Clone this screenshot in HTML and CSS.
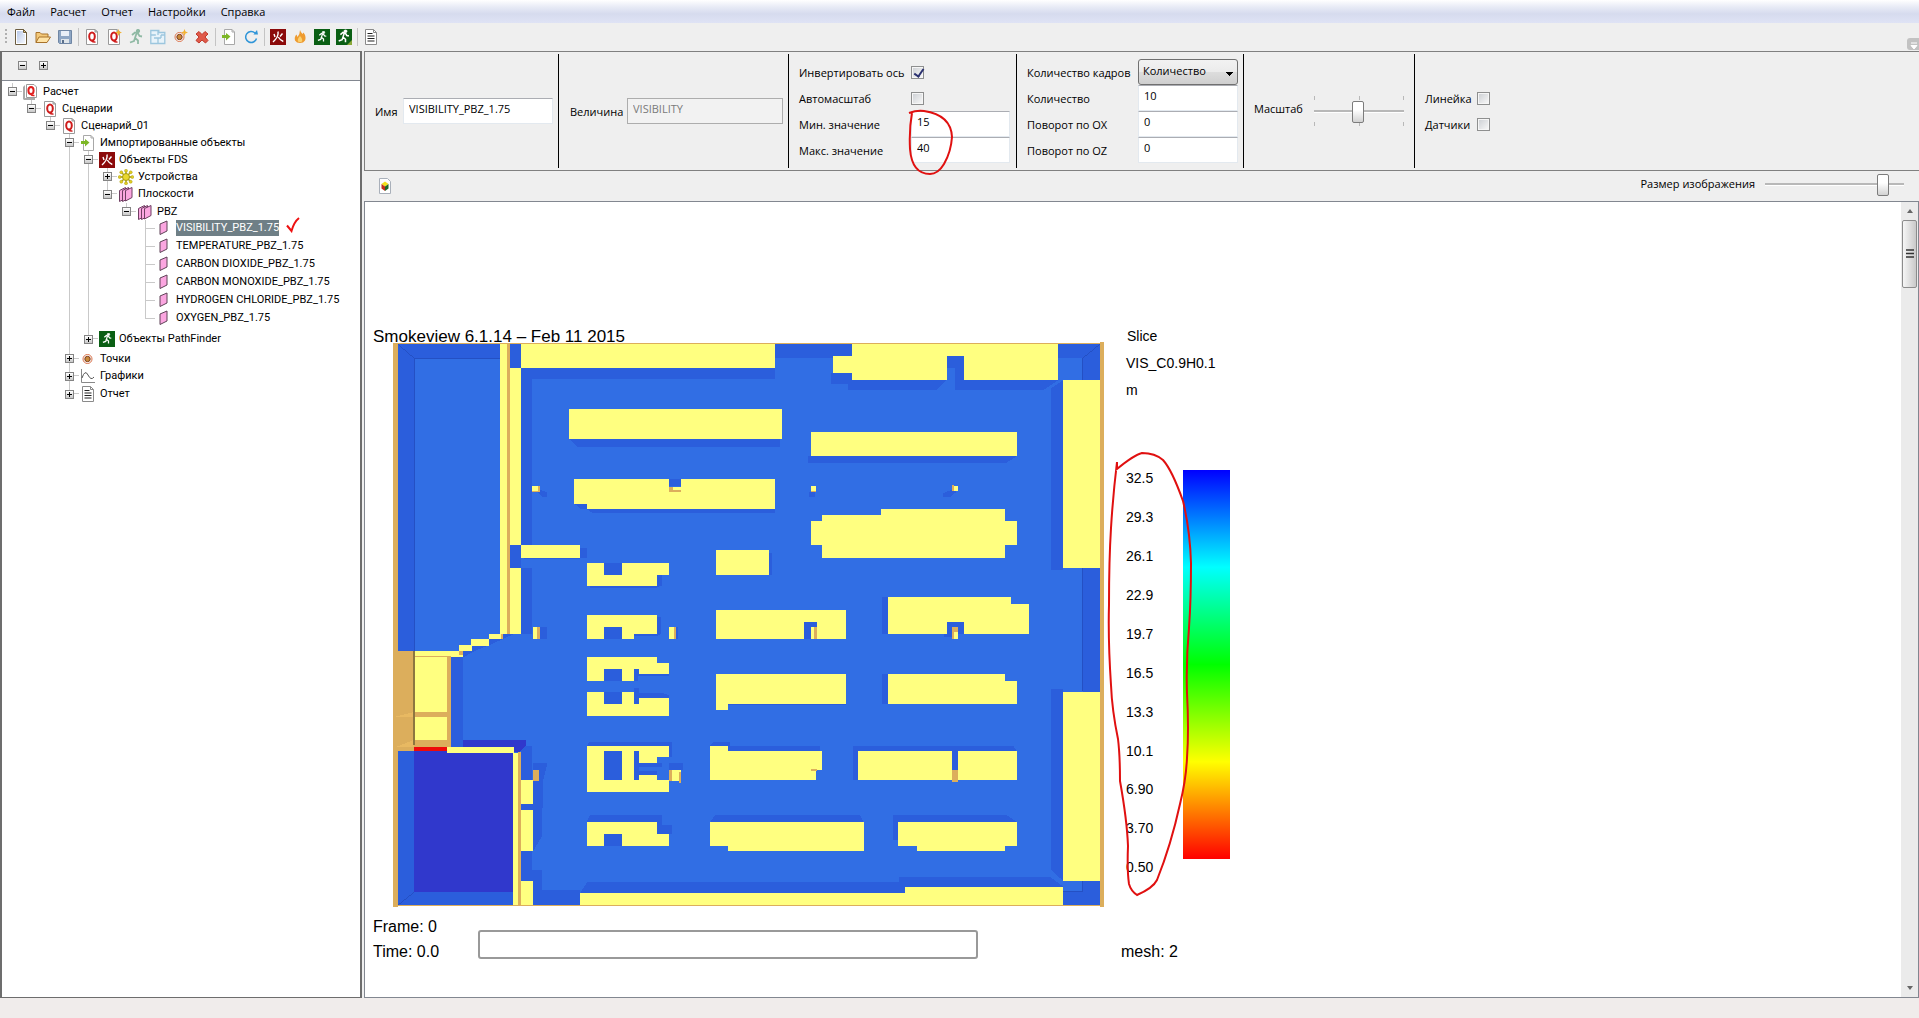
FILE: index.html
```html
<!DOCTYPE html>
<html lang="ru">
<head>
 <meta charset="utf-8">
 <title>Расчет</title>
 <link rel="stylesheet" href="styles.css">
</head>
<body>
<svg class="sprite" aria-hidden="true">
	<defs>
		<linearGradient id="gPaper" x1="0" y1="0" x2="1" y2="1"><stop offset="0" stop-color="#b9c9e8"/><stop offset="1" stop-color="#f4f7fc"/></linearGradient>
		<linearGradient id="gBar" x1="0" y1="0" x2="0" y2="1">
			<stop offset="0" stop-color="#0000ff"/><stop offset=".25" stop-color="#00ffff"/><stop offset=".5" stop-color="#00ff00"/><stop offset=".75" stop-color="#ffff00"/><stop offset="1" stop-color="#ff0000"/>
		</linearGradient>
	</defs>
	<symbol id="i-new" viewBox="0 0 16 16"><path d="M2.500.5h8l3 3v12h-11z" fill="#fff" stroke="#6b5c40"/><path d="M4 2h6v3h2v9H4z" fill="url(#gPaper)"/><path d="M10.500.5v3h3z" fill="#e8c36a" stroke="#6b5c40"/></symbol>
	<symbol id="i-open" viewBox="0 0 16 16"><path d="M1 13.500V3.500h4l1.500 1.500H13v3" fill="#f3c878" stroke="#a8722a"/><path d="M1 13.500L4 8h11.500L12 13.500z" fill="#ffe3a5" stroke="#a8722a"/></symbol>
	<symbol id="i-save" viewBox="0 0 16 16"><path d="M1.500 1.500h13v13h-12l-1-1z" fill="#8ea6c4" stroke="#6f86a4"/><path d="M4 2h8v5H4z" fill="#e9eff7"/><path d="M4 10h8v4H4z" fill="#dfe5ea"/><path d="M5 11h2v3H5z" fill="#5b708c"/></symbol>
	<symbol id="i-q" viewBox="0 0 16 16"><path d="M2.500.5h8.500l2.500 2.500v12.500h-11z" fill="#fff" stroke="#9a9a9a"/><path d="M11 .5v2.500h2.500z" fill="#ddd" stroke="#9a9a9a"/><ellipse cx="8" cy="7.500" rx="2.800" ry="4" fill="none" stroke="#cf1d1d" stroke-width="2"/><path d="M7.500 11.500q1.500 2 4 1.500" fill="none" stroke="#cf1d1d" stroke-width="1.500"/></symbol>
	<symbol id="i-qq" viewBox="0 0 16 16"><path d="M0 3l2-2v13h10v2H1l-1-1z" fill="#aaa"/><path d="M3.500.5h7.500l2.500 2.500v10.500h-10z" fill="#fff" stroke="#9a9a9a"/><ellipse cx="8" cy="6.500" rx="2.600" ry="3.500" fill="none" stroke="#e02020" stroke-width="2"/><path d="M7.500 10q1.500 2 4 1.500" fill="none" stroke="#e02020" stroke-width="1.500"/></symbol>
	<symbol id="i-qnew" viewBox="0 0 16 16"><use href="#i-q"/><path d="M12.500 0l1 2.500 2.500 1-2.500 1-1 2.500-1-2.500-2.500-1 2.500-1z" fill="#f2b233"/></symbol>
	<symbol id="i-run" viewBox="0 0 16 16"><circle cx="10" cy="2" r="1.700"/><path d="M4 6l3-2.500 3 1 1.500 2.500 2.500.5M8.500 4.500L7 9l3 2.500V15M7 9l-1 3-4 1.500" fill="none" stroke-width="1.800"/></symbol>
	<symbol id="i-plan" viewBox="0 0 16 16"><path d="M.8 1.500h8v2h6v11H.8zM.8 6h5M8 1.500V6M8 9v5.500M4 9h7M11 6h3.500M11 6v3" fill="#e8f3fa" stroke="#9cc6de" stroke-width="1.300"/></symbol>
	<symbol id="i-point" viewBox="0 0 16 16"><circle cx="7.500" cy="8" r="4.500" fill="#fff" stroke="#d9714a"/><circle cx="7.500" cy="8" r="2.700" fill="#c98a3a" stroke="#7c3a1c"/></symbol>
	<symbol id="i-pointnew" viewBox="0 0 16 16"><use href="#i-point"/><path d="M12.500 0l1 2.500 2.500 1-2.500 1-1 2.500-1-2.500-2.500-1 2.500-1z" fill="#f2b233"/></symbol>
	<symbol id="i-del" viewBox="0 0 16 16"><path d="M5 2.500l3 3 3-3L14 5l-3 3 3 3.500-2.500 2.500L8 11l-3 3-3-2.500L5 8 2 5z" fill="#e05a4a" stroke="#c03a2c"/></symbol>
	<symbol id="i-import" viewBox="0 0 16 16"><path d="M3.500.5h7.500l2.500 2.500v12.500h-10z" fill="#fff" stroke="#a8a8a8"/><path d="M11 .5v2.500h2.500" fill="none" stroke="#a8a8a8"/><path d="M1 6h4V4l4.500 3.500L5 11.500V9H1z" fill="#7db726"/></symbol>
	<symbol id="i-refresh" viewBox="0 0 16 16"><path d="M13.500 9.500A5.500 5.500 0 1 1 12 4" fill="none" stroke="#2f95d8" stroke-width="1.500"/><path d="M10.500 5.500h4.500L14 1z" fill="#2f95d8"/></symbol>
	<symbol id="i-fds" viewBox="0 0 16 16"><path d="M0 0h16v16H0z" fill="#8b0a0a"/><path d="M8 2.500q1 5-5 10.500M8.300 8q2 3.500 5 4.500M4 5l1 3M12.500 4.500L10 7.500" fill="none" stroke="#fff" stroke-width="1.400"/></symbol>
	<symbol id="i-fire" viewBox="0 0 16 16"><path d="M8 1q.5 2 2.500 4l1-1.500q3 4 1.500 8Q11.500 14 8 14t-5-2.500Q2 8 4.500 5.500L5.500 8Q8 5 8 1z" fill="#ee9b2f"/><path d="M8 7q3 3 2 5.500-2 1-4 0Q5 10 8 7z" fill="#fbd06c"/></symbol>
	<symbol id="i-pf" viewBox="0 0 16 16"><path d="M0 0h16v16H0z" fill="#0a5f14"/><g fill="#fff" stroke="#fff" transform="translate(2.500 2) scale(.7)"><use href="#i-run" width="16" height="16"/></g></symbol>
	<symbol id="i-pf2" viewBox="0 0 16 16"><path d="M0 0h16v16H0z" fill="#0a5f14"/><g fill="#fff" stroke="#fff" transform="translate(1 .5) scale(.85)"><use href="#i-run" width="16" height="16"/></g><path d="M16 11v5h-5z" fill="#8aa83a"/></symbol>
	<symbol id="i-report" viewBox="0 0 16 16"><path d="M2.500.5h8l3 3v12h-11z" fill="#fff" stroke="#8a8a8a"/><path d="M10.500.5v3h3" fill="none" stroke="#8a8a8a"/><path d="M4.500 4.500h5M4.500 7h7M4.500 9.500h7M4.500 12h7" stroke="#222" stroke-width="1.200"/></symbol>
	<symbol id="i-dev" viewBox="0 0 16 16"><g stroke="#a89a10" stroke-width="1.400"><path d="M8 1v14M1 8h14M3 3l10 10M13 3L3 13"/></g><g fill="#e3cf22" stroke="#a89a10" stroke-width=".5"><circle cx="8" cy="1.700" r="1.500"/><circle cx="8" cy="14.300" r="1.500"/><circle cx="1.700" cy="8" r="1.500"/><circle cx="14.300" cy="8" r="1.500"/><circle cx="3.300" cy="3.300" r="1.500"/><circle cx="12.700" cy="3.300" r="1.500"/><circle cx="3.300" cy="12.700" r="1.500"/><circle cx="12.700" cy="12.700" r="1.500"/></g><circle cx="8" cy="8" r="3.500" fill="#e9d82e" stroke="#a89a10"/></symbol>
	<symbol id="i-planes" viewBox="0 0 16 16"><g fill="#fba6e0" stroke="#6e3f62"><path d="M1.500 4.500l6-3v11l-6 3z"/><path d="M4.500 4.500l6-3v11l-6 3z"/><path d="M7.500 4.500l6.500-3v10l-6.500 3.500z"/></g></symbol>
	<symbol id="i-plane" viewBox="0 0 16 16"><path d="M4 4l7-3v10l-7 3.500z" fill="#fba6e0" stroke="#5e4357"/></symbol>
	<symbol id="i-chart" viewBox="0 0 16 16"><path d="M1.500 1v13.500H15" fill="none" stroke="#888"/><path d="M2 10q3-9 6-3t6 2" fill="none" stroke="#555"/></symbol>
	<symbol id="i-cube" viewBox="0 0 16 16"><path d="M2.500.5h8l3 3v12h-11z" fill="#fff" stroke="#a9b0ba"/><path d="M8 3.500l3.500 2.500L8 8.500 4.500 6z" fill="#f3e21c"/><path d="M4.500 6L8 8.500v4.500l-3.500-2.500z" fill="#c0301c"/><path d="M11.500 6L8 8.500v4.500l3.500-2.500z" fill="#1f6a2a"/></symbol>
</svg>

<nav class="menu">
	<button type="button">Файл</button>
	<button type="button">Расчет</button>
	<button type="button">Отчет</button>
	<button type="button">Настройки</button>
	<button type="button">Справка</button>
</nav>

<div class="toolbar">
	<span class="grip"></span>
	<button type="button" aria-label="Создать"><svg class="icon"><use href="#i-new"/></svg></button>
	<button type="button" aria-label="Открыть"><svg class="icon"><use href="#i-open"/></svg></button>
	<button type="button" aria-label="Сохранить"><svg class="icon"><use href="#i-save"/></svg></button>
	<span class="sep"></span>
	<button type="button" aria-label="Расчет"><svg class="icon"><use href="#i-q"/></svg></button>
	<button type="button" aria-label="Новый сценарий"><svg class="icon"><use href="#i-qnew"/></svg></button>
	<button type="button" aria-label="Эвакуация"><svg class="icon run"><use href="#i-run"/></svg></button>
	<button type="button" aria-label="План"><svg class="icon"><use href="#i-plan"/></svg></button>
	<button type="button" aria-label="Новая точка"><svg class="icon"><use href="#i-pointnew"/></svg></button>
	<button type="button" aria-label="Удалить"><svg class="icon"><use href="#i-del"/></svg></button>
	<span class="sep"></span>
	<button type="button" aria-label="Импорт"><svg class="icon"><use href="#i-import"/></svg></button>
	<button type="button" aria-label="Обновить"><svg class="icon"><use href="#i-refresh"/></svg></button>
	<span class="sep"></span>
	<button type="button" aria-label="FDS"><svg class="icon"><use href="#i-fds"/></svg></button>
	<button type="button" aria-label="Пожар"><svg class="icon"><use href="#i-fire"/></svg></button>
	<button type="button" aria-label="PathFinder"><svg class="icon"><use href="#i-pf"/></svg></button>
	<button type="button" aria-label="PathFinder 2"><svg class="icon"><use href="#i-pf2"/></svg></button>
	<span class="sep"></span>
	<button type="button" aria-label="Отчет"><svg class="icon"><use href="#i-report"/></svg></button>
	<span class="overflow"><svg width="12" height="12"><path d="M4 5h6M4 7.500h6L7 11z" stroke="#fff" fill="#fff"/></svg></span>
</div>

<div class="workspace">
	<aside class="side">
		<div class="side_bar">
			<button type="button" class="exp minus" aria-label="Свернуть все"></button>
			<button type="button" class="exp plus" aria-label="Развернуть все"></button>
		</div>
		<div class="tree">
			<ul>
				<li><div class="row"><button type="button" class="exp minus" aria-label="Свернуть"></button><svg class="icon"><use href="#i-qq"/></svg><span>Расчет</span></div>
				<ul>
					<li><div class="row"><button type="button" class="exp minus" aria-label="Свернуть"></button><svg class="icon"><use href="#i-q"/></svg><span>Сценарии</span></div>
					<ul>
						<li><div class="row"><button type="button" class="exp minus" aria-label="Свернуть"></button><svg class="icon"><use href="#i-q"/></svg><span>Сценарий_01</span></div>
						<ul>
							<li><div class="row"><button type="button" class="exp minus" aria-label="Свернуть"></button><svg class="icon"><use href="#i-import"/></svg><span>Импортированные объекты</span></div>
							<ul>
								<li><div class="row"><button type="button" class="exp minus" aria-label="Свернуть"></button><svg class="icon"><use href="#i-fds"/></svg><span>Объекты FDS</span></div>
								<ul>
									<li><div class="row"><button type="button" class="exp plus" aria-label="Развернуть"></button><svg class="icon"><use href="#i-dev"/></svg><span>Устройства</span></div></li>
									<li><div class="row tall"><button type="button" class="exp minus" aria-label="Свернуть"></button><svg class="icon"><use href="#i-planes"/></svg><span>Плоскости</span></div>
									<ul>
										<li><div class="row"><button type="button" class="exp minus" aria-label="Свернуть"></button><svg class="icon"><use href="#i-planes"/></svg><span>PBZ</span></div>
										<ul class="leaves">
											<li><div class="row"><svg class="icon"><use href="#i-plane"/></svg><span class="selected">VISIBILITY_PBZ_1.75</span><svg class="tick" width="14" height="16"><path d="M1 8.500l4.500 5.500Q8 5 13 1" fill="none" stroke="#ee1111" stroke-width="2"/></svg></div></li>
											<li><div class="row"><svg class="icon"><use href="#i-plane"/></svg><span>TEMPERATURE_PBZ_1.75</span></div></li>
											<li><div class="row"><svg class="icon"><use href="#i-plane"/></svg><span>CARBON DIOXIDE_PBZ_1.75</span></div></li>
											<li><div class="row"><svg class="icon"><use href="#i-plane"/></svg><span>CARBON MONOXIDE_PBZ_1.75</span></div></li>
											<li><div class="row"><svg class="icon"><use href="#i-plane"/></svg><span>HYDROGEN CHLORIDE_PBZ_1.75</span></div></li>
											<li><div class="row"><svg class="icon"><use href="#i-plane"/></svg><span>OXYGEN_PBZ_1.75</span></div></li>
										</ul></li>
									</ul></li>
								</ul></li>
								<li><div class="row pathfinder"><button type="button" class="exp plus" aria-label="Развернуть"></button><svg class="icon"><use href="#i-pf"/></svg><span>Объекты PathFinder</span></div></li>
							</ul></li>
							<li><div class="row"><button type="button" class="exp plus" aria-label="Развернуть"></button><svg class="icon"><use href="#i-point"/></svg><span>Точки</span></div></li>
							<li><div class="row tall"><button type="button" class="exp plus" aria-label="Развернуть"></button><svg class="icon"><use href="#i-chart"/></svg><span>Графики</span></div></li>
							<li><div class="row tall"><button type="button" class="exp plus" aria-label="Развернуть"></button><svg class="icon"><use href="#i-report"/></svg><span>Отчет</span></div></li>
						</ul></li>
					</ul></li>
				</ul></li>
			</ul>
		</div>
	</aside>

	<main class="content">
		<form class="props">
			<div class="group g_name"><label for="name">Имя</label><input type="text" id="name" value="VISIBILITY_PBZ_1.75"></div>
			<div class="group g_value"><label for="value">Величина</label><input type="text" id="value" value="VISIBILITY" disabled></div>
			<div class="group fields g_axis">
				<label for="invert">Инвертировать ось</label><input type="checkbox" id="invert" checked>
				<label for="auto">Автомасштаб</label><input type="checkbox" id="auto">
				<label for="min">Мин. значение</label><input type="text" id="min" value="15">
				<label for="max">Макс. значение</label><input type="text" id="max" value="40">
				<svg class="mark" width="48" height="68"><path d="M2 4Q10 1 17 2Q44 6 45 28Q44 43 37 55Q31 65 23 65Q5 65 3 40Q2 20 5 4" fill="none" stroke="#e01010" stroke-width="2"/></svg>
			</div>
			<div class="group fields g_frames">
				<label for="mode">Количество кадров</label><select id="mode"><option>Количество</option></select>
				<label for="count">Количество</label><input type="text" id="count" value="10">
				<label for="ox">Поворот по OX</label><input type="text" id="ox" value="0">
				<label for="oz">Поворот по OZ</label><input type="text" id="oz" value="0">
			</div>
			<div class="group g_scale"><label for="scale">Масштаб</label><span class="ticks"><input type="range" id="scale" min="0" max="100" value="49"></span></div>
			<div class="group fields g_show">
				<label for="ruler">Линейка</label><input type="checkbox" id="ruler">
				<label for="sensors">Датчики</label><input type="checkbox" id="sensors">
			</div>
		</form>

		<div class="image_bar">
			<button type="button" aria-label="Изображение"><svg class="icon"><use href="#i-cube"/></svg></button>
			<label for="size">Размер изображения</label>
			<input type="range" id="size" min="0" max="100" value="88">
		</div>

		<div class="viewport">
			<svg class="smokeview" width="880" height="790" viewBox="365 202 880 790">
				<!-- plan, three units to a pixel -->
				<g transform="translate(360 320) scale(.33333)" shape-rendering="crispEdges">
					<path d="M100 69H2231V1758H100z" fill="#316ee4"/>
					<!-- walls and shadows -->
					<g fill="#2b5edc">
						<path d="M113 72H2220V115H163V992H113z"/>
						<path d="M113 1293H163V1715H460V1758H113zM2168 115H2220V1758H2110V1715H2168z"/>
						<path d="M451 72H482V143H1245V177H516V675H451z"/>
						<path d="M451 675H482V745H516V942H451zM482 713H660V718H500zM660 683H682V713H660z"/>
						<path d="M627 357H1260V380H650zM680 567H1245V580H698zM926 478H962V498H926zM643 551H680V567H662z"/>
						<path d="M1412 160H1475V180H1760L1730 210H1463V193H1412zM1760 107H1812V180H2095L2050 210H1785V143H1760z"/>
						<path d="M2073 205L2110 180V750H2073zM2073 1107H2110V1683L2073 1650z"/>
						<path d="M1345 409H1970L1940 428H1345zM538 508L562 518V532H550L530 515zM1347 515H1365V530H1347z"/>
						<path d="M1777 508L1750 520V532H1770L1790 515z"/>
						<path d="M733 728H785V765H733zM890 765H905V797H900L890 803H690V797H890zM1228 700H1235V765H1228zM733 922H785V958H733zM822 942H890V890H902V942L890 948H822zM540 922H562V958H540zM947 922H954V958H947z"/>
						<path d="M1333 906H1370V922H1353V958H1333zM1565 832H1583V942H1565zM1760 906H1812V942H1793V922H1777V950H1752V942H1760z"/>
						<path d="M272 1010H309V1280H272zM309 994L336 977L388 958L430 942H462L400 970L340 995L310 1012z"/>
						<path d="M733 1047H785V1083H733zM822 1047H838V1062H926V1068H835V1083H822zM733 1115H785V1151H733zM822 1105H838V1135H926V1125L905 1118H838V1151H822zM1103 1151H1458V1156H1103zM1565 1063H1583V1151H1565z"/>
						<path d="M482 1277H516V1381H482zM519 1330H562L550 1380L545 1550L519 1594zM482 1594H516V1650H545V1710H660V1758H519V1683H482zM482 1453H519V1470H482z"/>
						<path d="M733 1293H785V1381H733zM690 1265H935V1312H926V1277H680zM822 1293H838V1329H905V1340H838V1352H890V1365H838V1381H822zM926 1330H970V1350H926z"/>
						<path d="M1060 1265H1110V1277H1380V1293H1103V1277H1051zM1480 1277H1960L1970 1293H1494V1381H1480zM1777 1293H1793V1350H1777z"/>
						<path d="M690 1485H905V1515H935V1543H890V1506H680zM733 1543H785V1579H733zM1065 1485H1500L1511 1506H1051zM1600 1485H1940L1970 1506H1614V1560H1600z"/>
						<path d="M660 1720L682 1686H1616V1670H2070L2110 1700V1720z"/>
					</g>
					<path d="M113 72L163 115V992M163 115H420M2220 72L2168 115V180M2168 745V1112M2110 1715H2168V1683M113 1756L161 1718" fill="none" stroke="#2450c4" stroke-width="3"/>
					<!-- closed room -->
					<path d="M161 1293H459V1715H161zM309 1260H498V1277L480 1295H461V1280H309z" fill="#3038cc"/>
					<g fill="#ffff80">
						<path d="M421 72H440V942H421zM451 143H482V675H451zM451 745H482V942H451zM482 72H1245V143H482z"/>
						<path d="M627 268H1265V357H627zM482 676H660V713H482zM1067 691H1228V765H1067z"/>
						<path d="M643 478H926V502H962V478H1245V567H680V551H643z"/>
						<path d="M680 728H733V765H785V728H926V765H890V797H680z"/>
						<path d="M680 886H890V942H822V958H785V922H733V958H680z"/>
						<path d="M1067 869H1458V958H1370V906H1333V958H1067z"/>
						<path d="M386 942H430V958H388V977H336V994H309V1010H262V1280H461V1299H261V1260H163V994H297V975H333V958H386z"/>
						<path d="M680 1010H890V1030H926V1062H838V1047H822V1083H785V1047H733V1083H680z"/>
						<path d="M680 1115H733V1151H785V1115H822V1151H838V1135H926V1187H680z"/>
						<path d="M680 1277H926V1312H890V1329H838V1293H822V1381H838V1365H890V1381H926V1417H680zM733 1293V1381H785V1293z" fill-rule="evenodd"/>
						<path d="M680 1506H890V1543H926V1579H785V1543H733V1579H680z"/>
						<path d="M1067 1063H1458V1151H1103V1171H1067zM1051 1277H1103V1293H1385V1349H1369V1381H1051z"/>
						<path d="M1051 1506H1511V1594H1103V1579H1051zM660 1720H1636V1700H2110V1756H660z"/>
						<path d="M1475 72H2095V180H1812V107H1760V180H1475V160H1420V107H1475z"/>
						<path d="M2110 180H2220V745H2110zM2110 1115H2220V1683H2110zM1352 337H1970V409H1352z"/>
						<path d="M1352 603H1385V586H1562V567H1934V603H1970V676H1934V713H1385V676H1352z"/>
						<path d="M1583 832H1954V853H2006V942H1812V906H1760V942H1583z"/>
						<path d="M1583 1063H1934V1083H1970V1151H1583zM1494 1293H1777V1381H1494zM1793 1293H1970V1381H1793z"/>
						<path d="M1614 1506H1970V1579H1934V1594H1672V1579H1614z"/>
						<path d="M459 1299H475V1758H459zM482 1381H519V1453H482zM482 1470H519V1594H482zM482 1683H519V1756H482z"/>
						<path d="M516 497H534V512H516zM518 922H532V958H518zM926 922H942V958H926zM1353 498H1369V514H1353zM1780 498H1793V514H1780zM1353 922H1363V958H1353zM1783 935H1793V958H1783zM936 1350H962V1382H936z"/>
					</g>
					<!-- openings and wall edges -->
					<g fill="#dcae5c">
						<path d="M100 69H113V992H161V1293H113V1762H100zM2220 66H2231V1762H2220zM100 69H2231V72H100zM100 1756H2231V1759H100z"/>
						<path d="M440 72H451V942H440zM262 1008H272V1280H262zM161 1176H262V1191H161zM161 1260H272V1280H161zM475 1295H482V1756H475z"/>
						<path d="M422 942H430V958H422zM297 994H309V1004H297zM163 1007H262V1010H163zM534 497H540V517H516V512H534zM532 922H540V958H532zM942 922H948V958H942z"/>
						<path d="M926 500H938V510H962V515H926zM1777 495H1783V514H1777zM1363 922H1370V958H1363zM1777 922H1793V935H1783V958H1777zM1353 512H1369V516H1353z"/>
						<path d="M518 1350H538V1382H518zM926 1350H936V1382H926zM957 1355H962V1388H957zM1777 1350H1793V1387H1777zM1352 1348H1370V1352H1352z"/>
					</g>
					<path d="M105 1190L161 1176V1191H105zM105 1282L161 1260V1280z" fill="#e8b962"/>
					<path d="M160 992H164V1275H160z" fill="#8d7740"/>
					<path d="M161 1280H261V1293H161z" fill="#ee0a0a"/>
				</g>
				<path d="M1183 470H1230V859H1183z" fill="url(#gBar)"/>
				<rect x="479" y="931" width="498" height="27" rx="2" fill="#fff" stroke="#999" stroke-width="2"/>
				<g class="sv_title">
					<text x="373" y="342">Smokeview 6.1.14 – Feb 11 2015</text>
				</g>
				<g class="sv_text">
					<text x="373" y="932">Frame: 0</text>
					<text x="373" y="957">Time: 0.0</text>
					<text x="1121" y="957">mesh: 2</text>
				</g>
				<g class="sv_legend">
					<text x="1127" y="341">Slice</text>
					<text x="1126" y="368">VIS_C0.9H0.1</text>
					<text x="1126" y="395">m</text>
					<text x="1126" y="483">32.5</text>
					<text x="1126" y="522">29.3</text>
					<text x="1126" y="561">26.1</text>
					<text x="1126" y="600">22.9</text>
					<text x="1126" y="639">19.7</text>
					<text x="1126" y="678">16.5</text>
					<text x="1126" y="717">13.3</text>
					<text x="1126" y="756">10.1</text>
					<text x="1126" y="794">6.90</text>
					<text x="1126" y="833">3.70</text>
					<text x="1126" y="872">0.50</text>
				</g>
				<path d="M1117 462V469Q1134 455 1142 453Q1155 453 1163 460Q1172 470 1183 501Q1190 530 1191 563Q1191 600 1189 628Q1186 660 1187 693Q1189 730 1187 758Q1186 780 1180 804Q1171 845 1157 880Q1153 888 1137 895Q1131 891 1129 884Q1127 870 1128 846Q1127 820 1120 781Q1120 755 1118 739Q1112 710 1111 685Q1108 640 1109 605Q1109 560 1111 528Q1113 495 1117 462" fill="none" stroke="#e01010" stroke-width="2"/>
			</svg>
			<div class="scroll">
				<button type="button" aria-label="Вверх"><svg width="6" height="4"><path d="M0 4h6L3 0z" fill="#666"/></svg></button>
				<span class="thumb"><svg width="8" height="10"><path d="M0 1h8M0 4.500h8M0 8h8" stroke="#333" stroke-width="1.500"/></svg></span>
				<button type="button" class="down" aria-label="Вниз"><svg width="6" height="4"><path d="M0 0h6L3 4z" fill="#666"/></svg></button>
			</div>
		</div>
	</main>
</div>
<footer class="status"></footer>
</body>
</html>
```
FILE: styles.css
```css
* { box-sizing: border-box; }
	body {
		margin: 0;
		height: 100vh;
		display: flex;
		flex-direction: column;
		overflow: hidden;
		background: #efefef;
		font-family: "Open Sans", "Noto Sans", sans-serif;
		font-size: 11px;
		line-height: 16px;
		color: #000000;
	}
	button, input, select { font: inherit; color: inherit; margin: 0; }
	button { padding: 0; border: 0; background: none; }
	ul { list-style: none; margin: 0; padding: 0; }
	.sprite { position: absolute; width: 0; height: 0; }
	.icon { width: 16px; height: 16px; flex: none; display: block; }

	.menu {
		display: flex;
		height: 23px;
		flex: none;
		background: linear-gradient(to bottom, #ffffff 0%, #e8ebf6 30%, #d6dbee 60%, #dfe3f5 100%);
	}
	.menu button { padding: 0 8px 0 7px; }

	.toolbar {
		display: flex;
		align-items: center;
		height: 28px;
		flex: none;
		padding: 0 0 1px 5px;
	}
	.toolbar button { width: 22px; display: flex; justify-content: center; }
	.grip { width: 5px; height: 15px; background: radial-gradient(circle at 1px 1px, #b0b0b0 1px, transparent 1px) 0 0 / 4px 4px repeat-y; }
	.sep { width: 5px; height: 18px; background: linear-gradient(#c4c4c4, #c4c4c4) center / 1px 100% no-repeat; }
	.run { fill: #8fb9a4; stroke: #8fb9a4; }
	.overflow { margin-left: auto; align-self: flex-end; height: 12px; background: #c2c2c2; border-radius: 3px 0 0 3px; }

	.workspace { flex: 1; display: flex; gap: 2px; min-height: 0; }
	.side {
		width: 362px;
		flex: none;
		display: flex;
		flex-direction: column;
		border: 2px solid #6d6d6d;
		border-top-width: 1px;
		border-bottom-width: 1px;
	}
	.side_bar { display: flex; gap: 12px; padding: 9px 16px; height: 28px; }
	.tree { flex: 1; background: #ffffff; border-top: 1px solid #828790; padding-top: 2px; font-family: Roboto, "Noto Sans", sans-serif; }

	.exp {
		width: 9px;
		height: 9px;
		flex: none;
		border: 1px solid #848484;
		background: linear-gradient(#000, #000) center / 5px 1px no-repeat, linear-gradient(to bottom, #ffffff, #c8c8c8);
	}
	.exp.plus { background: linear-gradient(#000, #000) center / 5px 1px no-repeat, linear-gradient(#000, #000) center / 1px 5px no-repeat, linear-gradient(to bottom, #ffffff, #c8c8c8); }

	.tree ul ul { margin-left: 19px; }
	.tree li { position: relative; }
	.tree li::before { content: ""; position: absolute; left: 10px; top: 0; bottom: 0; border-left: 1px solid #c9c9c9; }
	.tree li:last-child::before { bottom: auto; height: 9px; }
	.row { position: relative; display: flex; align-items: center; height: 17px; padding-left: 6px; white-space: nowrap; }
	.row::before { content: ""; position: absolute; left: 10px; width: 10px; top: 8px; border-top: 1px solid #c9c9c9; }
	.row .exp { position: relative; margin-right: 6px; }
	.row .icon { position: relative; margin-right: 4px; }
	.row.tall { height: 18px; }
	.row.pathfinder { height: 22px; }
	.row.pathfinder::before { top: 10px; }
	.leaves .row { height: 18px; padding: 0 0 2px 21px; }
	.selected { background: #6f7f86; color: #ffffff; }
	.tick { margin-left: 7px; margin-top: -6px; }

	.content { flex: 1; min-width: 0; display: flex; flex-direction: column; }
	.props {
		display: flex;
		height: 120px;
		flex: none;
		padding: 2px 0;
		border: 1px solid #808080;
		border-right: 0;
	}
	.group { position: relative; display: flex; align-items: center; padding: 0 5px 0 10px; border-right: 1px solid #000000; white-space: nowrap; }
	.group label { flex: none; padding-top: 2px; }
	input[type=text] {
		height: 26px;
		min-width: 0;
		padding: 0 5px 5px;
		border: 1px solid #e3e9ef;
		border-top-color: #abadb3;
		background: #ffffff;
	}
	input[type=text]:disabled { background: #f2f2f2; border-color: #adadad; color: #7a7a7a; }
	.g_name { width: 194px; justify-content: space-between; }
	.g_value { width: 230px; padding-left: 11px; justify-content: space-between; }
	.g_name input { width: 150px; }
	.g_value input { width: 156px; }
	.fields { display: grid; grid-auto-rows: 26px; align-content: center; align-items: center; }
	.g_axis { width: 228px; grid-template-columns: 112px 99px; }
	.g_frames { width: 227px; grid-template-columns: 111px 100px; }
	.g_scale { width: 171px; justify-content: space-between; padding-right: 10px; }
	.g_show { grid-template-columns: 52px 13px; border-right: 0; }
	.g_scale label { padding-bottom: 6px; }
	.mark { position: absolute; left: 118px; top: 55px; z-index: 1; pointer-events: none; }

	input[type=checkbox] {
		appearance: none;
		width: 13px;
		height: 13px;
		border: 1px solid #8e8f8f;
		background: linear-gradient(135deg, #cfd2d6, #f6f6f6) center / 9px 9px no-repeat #f6f6f6;
	}
	input[type=checkbox]:checked::before {
		content: "";
		display: block;
		width: 4px;
		height: 8px;
		margin: 0 0 0 4px;
		border: solid #2b3170;
		border-width: 0 2px 2px 0;
		transform: rotate(35deg);
	}
	select {
		appearance: none;
		height: 26px;
		padding: 0 4px 3px;
		border: 1px solid #707070;
		border-radius: 3px;
		background: linear-gradient(to bottom right, #000 50%, transparent 50%) 91px 12px / 4px 4px no-repeat, linear-gradient(to bottom left, #000 50%, transparent 50%) 87px 12px / 4px 4px no-repeat, linear-gradient(to bottom, #f2f2f2 0%, #ebebeb 50%, #dddddd 50%, #cfcfcf 100%);
	}

	input[type=range] { appearance: none; display: block; width: 100%; height: 22px; background: none; }
	input[type=range]::-webkit-slider-runnable-track { height: 3px; background: #ffffff; border-top: 2px solid #b8b8b8; }
	input[type=range]::-webkit-slider-thumb {
		appearance: none;
		width: 12px;
		height: 22px;
		margin-top: -11px;
		border: 1px solid #7c7c7c;
		border-radius: 2px;
		background: linear-gradient(to bottom, #ffffff 40%, #d2d2d2 100%);
	}
	.ticks {
		width: 90px;
		padding: 4px 0;
		background:
			linear-gradient(#b8b8b8, #b8b8b8) 0 0 / 1px 4px no-repeat, linear-gradient(#b8b8b8, #b8b8b8) 50% 0 / 1px 4px no-repeat, linear-gradient(#b8b8b8, #b8b8b8) 100% 0 / 1px 4px no-repeat,
			linear-gradient(#b8b8b8, #b8b8b8) 0 100% / 1px 4px no-repeat, linear-gradient(#b8b8b8, #b8b8b8) 50% 100% / 1px 4px no-repeat, linear-gradient(#b8b8b8, #b8b8b8) 100% 100% / 1px 4px no-repeat;
	}

	.image_bar { display: flex; align-items: center; height: 30px; flex: none; padding: 0 15px 4px 13px; }
	.image_bar button { padding-top: 4px; }
	.image_bar label { margin-left: auto; margin-right: 10px; }
	.image_bar input { width: 139px; }

	.viewport { flex: 1; min-height: 0; display: flex; justify-content: space-between; border: 1px solid #828790; background: #ffffff; overflow: hidden; }
	.smokeview { flex: none; font-family: "Liberation Sans", Arial, sans-serif; }
	.sv_title { font-size: 17px; }
	.sv_text { font-size: 16px; }
	.sv_legend { font-size: 14px; }

	.scroll { width: 17px; display: flex; flex-direction: column; align-items: stretch; background: #ebebeb; }
	.scroll button { height: 18px; display: flex; align-items: center; justify-content: center; }
	.scroll .down { margin-top: auto; }
	.thumb {
		height: 68px;
		margin: 0 1px;
		display: flex;
		align-items: center;
		justify-content: center;
		border: 1px solid #8c8c8c;
		border-radius: 2px;
		background: linear-gradient(to right, #f6f6f6, #c9c9c9);
	}
	.status { height: 20px; flex: none; background: #f0eceb; }
```
